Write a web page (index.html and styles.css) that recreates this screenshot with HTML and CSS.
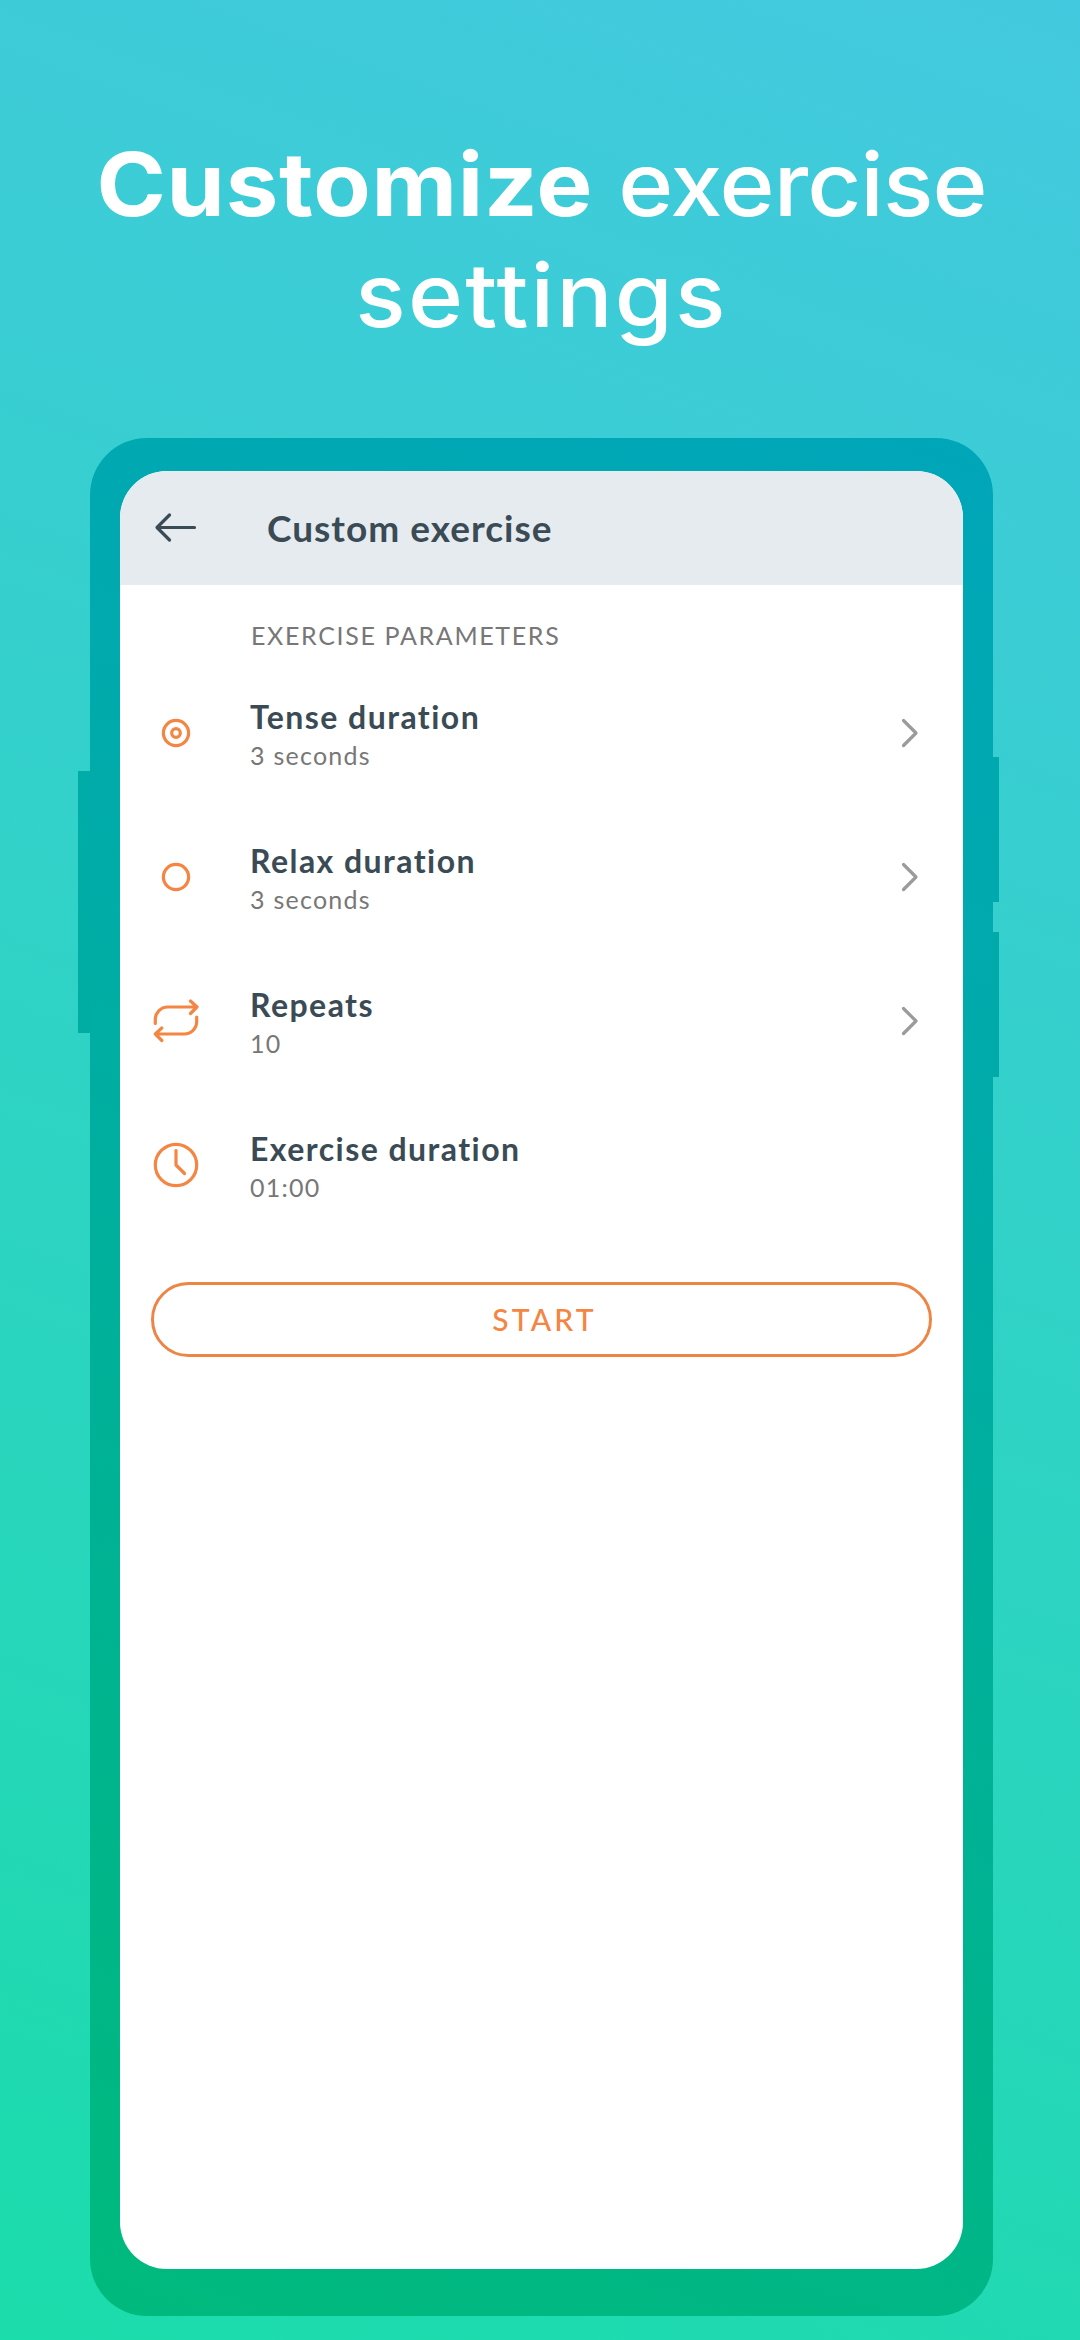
FILE: index.html
```html
<!DOCTYPE html>
<html lang="en">
<head>
<meta charset="utf-8">
<title>Custom exercise</title>
<link rel="stylesheet" href="styles.css">
</head>
<body>
<main class="poster">
  <h1 class="headline"><span class="line"><strong class="strong">Customize</strong> <span class="light">exercise</span></span><span class="line second">settings</span></h1>
  <div class="phone">
    <span class="key key-left"></span>
    <span class="key key-up"></span>
    <span class="key key-down"></span>
    <section class="screen">
      <header class="bar">
        <svg class="back" viewBox="0 0 44 32"><path d="M40.500 15.500H4M15.500 3 3 15.500 15.500 28"/></svg>
        <h2 class="title">Custom exercise</h2>
      </header>
      <h3 class="caption">EXERCISE PARAMETERS</h3>
      <ul class="rows">
        <li class="row">
          <svg class="icon" viewBox="0 0 48 48"><circle cx="24" cy="24" r="12.600"/><circle cx="24" cy="24" r="4.300"/></svg>
          <div class="text"><p class="name">Tense duration</p><p class="value">3 seconds</p></div>
          <svg class="chevron" viewBox="0 0 18 30"><path d="M2.500 2.500 15 15 2.500 27.500"/></svg>
        </li>
        <li class="row">
          <svg class="icon" viewBox="0 0 48 48"><circle cx="24" cy="24" r="12.600"/></svg>
          <div class="text"><p class="name">Relax duration</p><p class="value">3 seconds</p></div>
          <svg class="chevron" viewBox="0 0 18 30"><path d="M2.500 2.500 15 15 2.500 27.500"/></svg>
        </li>
        <li class="row">
          <svg class="icon" viewBox="0 0 48 48"><path d="M3.300 26.500V23A12.500 12.500 0 0 1 15.800 10H45M38.500 4l6.500 6-6.500 6.500M44.700 20V24.500A12.500 12.500 0 0 1 32.200 37H3.500M9.800 31l-6.500 6 6.500 6.500"/></svg>
          <div class="text"><p class="name">Repeats</p><p class="value">10</p></div>
          <svg class="chevron" viewBox="0 0 18 30"><path d="M2.500 2.500 15 15 2.500 27.500"/></svg>
        </li>
        <li class="row">
          <svg class="icon" viewBox="0 0 48 48"><circle cx="24" cy="24" r="20.700"/><path d="M24 9.500V24l8.500 8.500"/></svg>
          <div class="text"><p class="name">Exercise duration</p><p class="value">01:00</p></div>
        </li>
      </ul>
      <button class="start">START</button>
    </section>
  </div>
</main>
</body>
</html>
```

FILE: styles.css
```css
* { box-sizing: border-box; margin: 0; padding: 0; }

body {
  width: 1080px;
  height: 2340px;
  overflow: hidden;
  font-family: Lato, sans-serif;
}

.poster {
  display: flex;
  flex-direction: column;
  height: 2340px;
  padding: 129px 87px 24px 90px;
  background: linear-gradient(20deg, #1bdcab, #3bcdd5 78%, #43c9df);
}

.headline {
  height: 309px;
  color: #fff;
  font: 500 88px/111px Inter, sans-serif;
  text-align: center;
  white-space: nowrap;
}
.line { display: block; transform: scaleX(1.065); }
.strong { font-weight: 700; letter-spacing: 0.750px; }
.light { letter-spacing: -0.900px; }
.second { letter-spacing: 2px; }

.phone {
  position: relative;
  flex: 1;
  padding: 33px 30px 47px;
  border-radius: 57px;
  background: linear-gradient(20deg, #00ba7c, #00abaa 70%, #00a6b9);
}

.key { position: absolute; }
.key-left { left: -12px; top: 333px; width: 12px; height: 262px; background: linear-gradient(#00aca8, #00ada2); }
.key-up { right: -6px; top: 319px; width: 6px; height: 145px; background: #00a9ae; }
.key-down { right: -6px; top: 494px; width: 6px; height: 145px; background: #00aaa9; }

.screen {
  height: 100%;
  overflow: hidden;
  border-radius: 47px;
  background: #fff;
}

.bar {
  display: flex;
  align-items: center;
  height: 114px;
  padding-left: 34px;
  background: #e5ebef;
  color: #3a4b55;
}
.back { width: 44px; height: 32px; stroke: #3a4b55; }
.title { margin-left: 69px; font-size: 37px; line-height: 44px; letter-spacing: 1px; }

svg { flex: none; fill: none; stroke-width: 3.200px; stroke-linecap: round; stroke-linejoin: round; }

.caption {
  padding: 34px 0 0 131px;
  color: #777;
  font-size: 25px;
  font-weight: 400;
  line-height: 32px;
  letter-spacing: 1.650px;
}

.rows { margin-top: 10px; list-style: none; }
.row {
  display: flex;
  align-items: center;
  height: 144px;
  padding: 0 44px 0 32px;
}
.icon { width: 48px; height: 48px; stroke: #f58542; }
.text { flex: 1; margin-left: 50px; padding-top: 3px; }
.name { color: #3a4b55; font-size: 32px; font-weight: 700; line-height: 40px; letter-spacing: 1.450px; }
.value { color: #777; font-size: 25px; line-height: 36px; letter-spacing: 1.250px; }
.chevron { width: 18px; height: 30px; stroke: #9b9b9b; }

.start {
  display: block;
  width: 781px;
  height: 75px;
  margin: 45px 0 0 31px;
  padding: 0 0 1px 6px;
  border: 3px solid #ed8545;
  border-radius: 38px;
  background: none;
  color: #f58542;
  font: 500 30px/40px Lato, sans-serif;
  letter-spacing: 3.200px;
}
```
